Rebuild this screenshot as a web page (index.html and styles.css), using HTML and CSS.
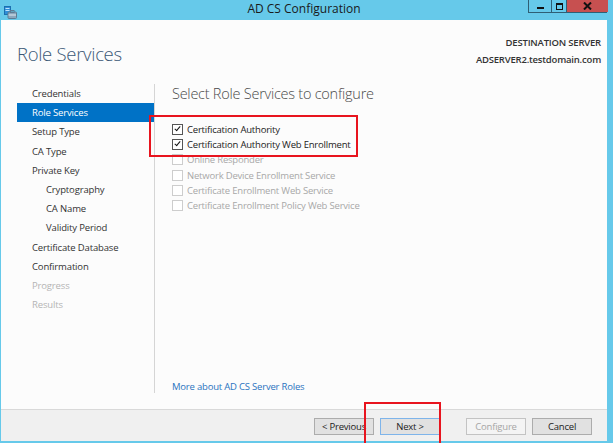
FILE: index.html
```html
<!DOCTYPE html>
<html lang="en">
<head>
  <meta charset="UTF-8" />
  <title>AD CS Configuration</title>
  <link rel="stylesheet" href="styles.css">
</head>
<body>
  <div class="window">
    <!-- Title bar -->
    <div class="titlebar">
      <div class="app-icon">
        <svg width="13" height="13" viewBox="0 0 13 13">
          <rect x="0.5" y="0.5" width="6" height="8" fill="#2f8fd8" stroke="#1b6fb0" />
          <rect x="1.5" y="2" width="4" height="1" fill="#bfe3ff" />
          <rect x="1.5" y="4" width="4" height="1" fill="#bfe3ff" />
          <rect x="4" y="6" width="8.5" height="6.5" rx="1" fill="#8aa7bd" stroke="#5d7c94" />
          <rect x="6.5" y="4.5" width="3.5" height="2" fill="none" stroke="#5d7c94" />
          <rect x="4.5" y="8.5" width="7.5" height="1" fill="#dfe9f1" />
        </svg>
      </div>
      <div class="title">AD CS Configuration</div>
      <div class="controls">
        <div class="ctl ctl-min"><span class="min-bar"></span></div>
        <div class="ctl ctl-max"><span class="max-box"></span></div>
        <div class="ctl ctl-close">
          <svg width="9" height="8" viewBox="0 0 9 8">
            <path d="M1 0.5 L8 7.5 M8 0.5 L1 7.5" stroke="#111" stroke-width="2" />
          </svg>
        </div>
      </div>
    </div>

    <div class="content">
      <!-- Header -->
      <div class="header">
        <div class="page-title">Role Services</div>
        <div class="dest">
          <div class="dest-label">DESTINATION SERVER</div>
          <div class="dest-name">ADSERVER2.testdomain.com</div>
        </div>
      </div>

      <!-- Wizard body -->
      <div class="wizard">
        <ul class="steps">
          <li>Credentials</li>
          <li class="active">Role Services</li>
          <li>Setup Type</li>
          <li>CA Type</li>
          <li>Private Key</li>
          <li class="sub">Cryptography</li>
          <li class="sub">CA Name</li>
          <li class="sub">Validity Period</li>
          <li>Certificate Database</li>
          <li>Confirmation</li>
          <li class="off">Progress</li>
          <li class="off">Results</li>
        </ul>

        <div class="panel">
          <div class="panel-title">Select Role Services to configure</div>
          <div class="options">
            <div class="option"><span class="box checked"></span>Certification Authority</div>
            <div class="option"><span class="box checked"></span>Certification Authority Web Enrollment</div>
            <div class="option off"><span class="box"></span>Online Responder</div>
            <div class="option off"><span class="box"></span>Network Device Enrollment Service</div>
            <div class="option off"><span class="box"></span>Certificate Enrollment Web Service</div>
            <div class="option off"><span class="box"></span>Certificate Enrollment Policy Web Service</div>
            <div class="mark mark-roles"></div>
          </div>
          <a class="more" href="#">More about AD CS Server Roles</a>
        </div>
      </div>

      <!-- Buttons -->
      <div class="footer">
        <button class="btn">&lt; Previous</button>
        <button class="btn default">Next &gt;</button>
        <button class="btn disabled gap">Configure</button>
        <button class="btn">Cancel</button>
        <div class="mark mark-next"></div>
      </div>
    </div>
  </div>
</body>
</html>
```

FILE: styles.css
```css
body {
  margin: 0;
  padding: 0;
  font-family: "Open Sans", "Noto Sans", sans-serif;
  overflow: hidden;
}
.window {
  width: 613px;
  height: 443px;
  box-sizing: border-box;
  background: #66c9ea;
  padding: 0 6px 2px 1px;
  display: flex;
  flex-direction: column;
}
/* Title bar */
.titlebar {
  height: 20px;
  display: flex;
  align-items: flex-start;
  position: relative;
}
.app-icon {
  padding: 2px 0 0 3px;
  height: 13px;
}
.title {
  position: absolute;
  left: 0;
  right: 0;
  top: 1px;
  text-align: center;
  font-size: 12px;
  color: #1a1a1a;
  line-height: 15px;
}
.controls {
  margin-left: auto;
  position: relative;
  width: 79px;
  flex: none;
  display: grid;
  grid-template-columns: 23px 15px 41px;
  border: 1px solid #2f5f75;
  border-top: none;
  box-sizing: border-box;
  height: 13px;
}
.ctl {
  display: flex;
  align-items: center;
  justify-content: center;
  border-right: 1px solid #2f5f75;
}
.ctl-close {
  background: #c75050;
  border-right: none;
}
.min-bar {
  width: 7px;
  height: 2px;
  background: #111;
  margin-top: 4px;
}
.max-box {
  width: 5px;
  height: 4px;
  border: 1px solid #111;
  border-top-width: 2px;
}
/* Content */
.content {
  flex: 1;
  background: #fcfcfc;
  display: flex;
  flex-direction: column;
  position: relative;
}
.header {
  height: 63px;
  display: flex;
  justify-content: space-between;
  padding: 0 6px 0 16px;
}
.page-title {
  font-size: 18.5px;
  font-weight: 300;
  color: #3b5876;
  margin-top: 21px;
  letter-spacing: -0.3px;
}
.dest {
  text-align: right;
  font-size: 9.5px;
  font-weight: 600;
  color: #333;
  margin-top: 14px;
  line-height: 17px;
  letter-spacing: -0.2px;
}
/* Wizard */
.wizard {
  flex: 1;
  display: flex;
  padding-bottom: 16px;
}
.steps {
  list-style: none;
  margin: 1px 0 0 16px;
  padding: 0;
  width: 137px;
  border-right: 1px solid #d5d5d5;
  font-size: 9.5px;
  color: #333;
  letter-spacing: -0.15px;
}
.steps li {
  height: 19.2px;
  line-height: 19.2px;
  padding-left: 15px;
}
.steps li.sub {
  padding-left: 29px;
}
.steps li.active {
  background: #0072c6;
  color: #fff;
}
.steps li.off {
  color: #b4b4b4;
}
.panel {
  flex: 1;
  display: flex;
  flex-direction: column;
  padding: 0 0 0 17px;
}
.panel-title {
  font-size: 14.5px;
  font-weight: 300;
  color: #4a4a4a;
  line-height: 20px;
  margin-top: 1px;
  letter-spacing: -0.25px;
}
.options {
  margin-top: 18px;
  position: relative;
}
.option {
  height: 15.2px;
  display: flex;
  align-items: center;
  font-size: 9.5px;
  color: #222;
  letter-spacing: -0.2px;
}
.option.off {
  color: #a8a8a8;
}
.box {
  width: 9px;
  height: 9px;
  border: 1px solid #555;
  background: #fff;
  margin-right: 4px;
  flex: none;
  position: relative;
}
.option.off .box {
  border-color: #cdcdcd;
}
.box.checked::after {
  content: "";
  position: absolute;
  left: 3px;
  top: 0px;
  width: 2px;
  height: 5px;
  border: solid #111;
  border-width: 0 1.5px 1.5px 0;
  transform: rotate(40deg);
}
.more {
  margin-top: auto;
  font-size: 9.5px;
  color: #2a73c0;
  text-decoration: none;
  letter-spacing: -0.2px;
  margin-bottom: 0;
  line-height: 12px;
}
/* Footer */
.footer {
  height: 32px;
  box-sizing: border-box;
  border-top: 1px solid #d9d9d9;
  background: #f0f0f0;
  display: flex;
  justify-content: flex-end;
  align-items: flex-start;
  padding: 8px 15px 0 0;
  gap: 6px;
  position: relative;
}
.btn {
  width: 60px;
  height: 17px;
  box-sizing: border-box;
  border: 1px solid #acacac;
  background: #e1e1e1;
  font-family: inherit;
  font-size: 9.5px;
  color: #222;
  padding: 0;
  letter-spacing: -0.2px;
}
.btn.default {
  border-color: #7eb4ea;
}
.btn.disabled {
  background: #f4f4f4;
  border-color: #c3c3c3;
  color: #a6a6a6;
}
.btn.gap {
  margin-left: 20px;
}
/* Red highlight frames */
.mark {
  position: absolute;
  border: 2px solid #e8141e;
  pointer-events: none;
}
.mark-roles {
  left: -23px;
  top: -7px;
  width: 205px;
  height: 38px;
}
.mark-next {
  left: 363px;
  top: -8px;
  width: 73px;
  height: 50px;
}
```
